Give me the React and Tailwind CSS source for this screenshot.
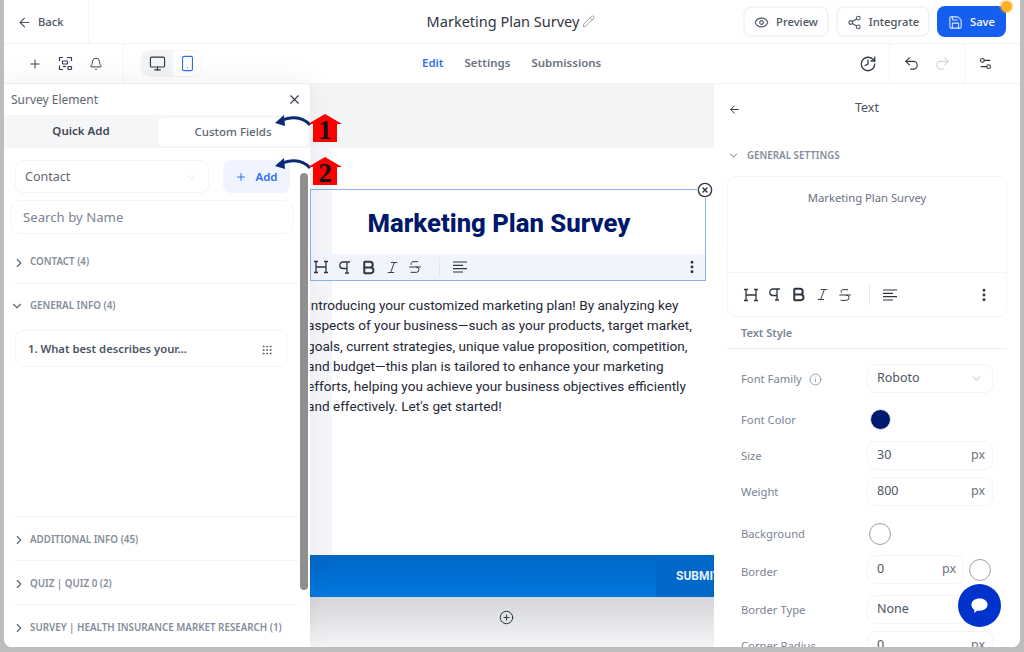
import { ArrowLeft, Eye, Share2, Save, Plus, Bell, Monitor, Smartphone, History, Undo2, Redo2, Settings2, X, ChevronDown, ChevronRight, Grip, Pencil, Bold, Italic, Strikethrough, MoreVertical, Info, CircleX, CirclePlus } from 'lucide-react';

const sections = [
    { label: 'ADDITIONAL INFO (45)' },
    { label: 'QUIZ | QUIZ 0 (2)' },
    { label: 'SURVEY | HEALTH INSURANCE MARKET RESEARCH (1)' },
];

function SerifH({ size = 16 }) {
    return (
        <svg width={size} height={size} viewBox="0 0 16 16" fill="none" stroke="currentColor" strokeWidth="1.3">
            <path d="M1 2.5h4M3 2.5v11M1 13.5h4M11 2.5h4M13 2.5v11M11 13.5h4M3 8h10" />
        </svg>
    );
}

function ParaIcon({ className }) {
    return (
        <svg width="15" height="15" viewBox="0 0 15 15" fill="none" stroke="currentColor" strokeWidth="1.3" className={className}>
            <path d="M13 2H6a3 3 0 0 0 0 6.500h4M10 2v11M8 13h4" />
        </svg>
    );
}

function AlignIcon({ className }) {
    return (
        <svg width="16" height="16" viewBox="0 0 16 16" fill="none" stroke="currentColor" strokeWidth="1.2" className={className}>
            <path d="M1 3h14M1 6.300h10M1 9.600h14M1 13h10" />
        </svg>
    );
}

function FieldsIcon({ className }) {
    return (
        <svg width="15" height="15" viewBox="0 0 15 15" fill="none" stroke="currentColor" strokeWidth="1.2" className={className}>
            <path d="M5 1.500H1.500V5M1.500 9.500v4H5M9 1.500h4.500V5" />
            <rect x="4.500" y="5" width="5" height="3" rx="0.700" />
            <rect x="10" y="10.500" width="3.500" height="3" rx="0.700" />
            <path d="M5 10.500h3" />
        </svg>
    );
}

function TextToolbar({ className }) {
    return (
        <div className={`flex items-center text-[#2f3640] ${className}`}>
            <SerifH />
            <ParaIcon className="ml-2" />
            <Bold size={17} strokeWidth={2.8} className="ml-2" />
            <Italic size={15} strokeWidth={1.5} className="ml-2" />
            <Strikethrough size={16} strokeWidth={1.5} className="ml-[7px]" />
            <div className="w-px h-5 bg-gray-200 ml-4" />
            <AlignIcon className="ml-3" />
            <MoreVertical size={16} strokeWidth={2.4} className="ml-auto" />
        </div>
    );
}

function Callout({ num, className }) {
    return (
        <div className={`absolute w-[72px] h-[32px] ${className}`}>
            <svg width="72" height="32" viewBox="0 0 72 32" className="absolute left-0 top-0">
                <path d="M38 13 C 30 4, 20 4, 8 9" fill="none" stroke="#0a2a78" strokeWidth="2.8" />
                <path d="M3 11 L12 3 L13 14 Z" fill="#0a2a78" />
                <path d="M36 12 L53 2 L70 12 L65 12 L65 30 L41 30 L41 12 Z" fill="#ff0000" />
            </svg>
            <span className="absolute left-[38px] top-[4px] w-[30px] text-center text-[27px] leading-[28px] font-bold text-[#111] font-['Liberation_Serif',serif]">{num}</span>
        </div>
    );
}

function FieldRow({ label, info, children, className = '', labelClass = 'pt-[1px]' }) {
    return (
        <div className={`flex items-center pl-[27px] pr-[27px] ${className}`}>
            <div className={`w-[126px] flex items-center gap-[7px] text-[11.25px] text-[#7b8494] ${labelClass}`}>
                {label}
                {info && <Info size={13} strokeWidth={1.4} />}
            </div>
            {children}
        </div>
    );
}

function PxInput({ value, className = 'w-[126px]' }) {
    return (
        <div className={`h-[29px] border border-gray-100 rounded-lg px-[9px] flex items-center justify-between text-[12.5px] text-[#4b5563] ${className}`}>
            <span>{value}</span>
            <span className="text-[#6b7280] -mr-[2px]">px</span>
        </div>
    );
}

function SectionRow({ label, open, border = true }) {
    return (
        <div className={`h-[44px] flex items-center mx-[11px] ${border ? 'border-t border-gray-100' : ''}`}>
            {open
                ? <ChevronDown size={14} className="shrink-0 text-[#5f6673] -ml-[5px]" />
                : <ChevronRight size={14} className="shrink-0 text-[#5f6673] -ml-[3px] mt-[3px]" />}
            <span className={`${open ? 'ml-[6px] pt-[1px]' : 'ml-[4px] pt-[3px]'} text-[9.8px] font-semibold text-[#858d9b] whitespace-nowrap`}>{label}</span>
        </div>
    );
}

export default function App() {
    return (
        <div className="w-[1024px] h-[652px] overflow-hidden bg-[#bdbdbd] pl-[4px] pr-[4px] pb-[5px] font-['Noto_Sans',sans-serif]">
            <div className="relative w-full h-full bg-white rounded-b-lg overflow-hidden flex flex-col">
                {/* Top bar */}
                <header className="h-[44px] shrink-0 flex items-center border-b border-gray-100">
                    <div className="w-[85px] h-full flex items-center pl-[13px] pt-[1px] gap-[6px] border-r border-gray-100 text-[11.25px] font-medium text-[#4b5563]">
                        <ArrowLeft size={15} strokeWidth={1.8} />
                        Back
                    </div>
                    <div className="flex-1 flex items-center justify-center gap-[3px] ml-[190px] text-[14.5px] text-[#2f3640]">
                        Marketing Plan Survey
                        <Pencil size={13} strokeWidth={1.4} className="text-[#7b8494]" />
                    </div>
                    <div className="flex items-center gap-[7px] pr-[14px]">
                        <button className="w-[86px] h-[31px] pt-[1px] border-2 border-gray-100 rounded-lg flex items-center justify-center gap-[7px] text-[11.25px] font-medium text-[#4b5563]">
                            <Eye size={15} strokeWidth={1.7} />
                            Preview
                        </button>
                        <button className="w-[94px] h-[31px] pt-[1px] border-2 border-gray-100 rounded-lg flex items-center justify-center gap-[7px] text-[11.25px] font-medium text-[#4b5563]">
                            <Share2 size={15} strokeWidth={1.7} />
                            Integrate
                        </button>
                        <button className="relative w-[69px] h-[31px] pt-[1px] rounded-lg bg-[#155eef] flex items-center justify-center gap-[7px] text-[11.25px] font-medium text-white">
                            <Save size={15} strokeWidth={1.7} className="text-blue-100" />
                            Save
                            <span className="absolute -right-[6px] -top-[5px] w-[11px] h-[11px] rounded-full bg-[#fdb022] ring-2 ring-[#fdb022]/25" />
                        </button>
                    </div>
                </header>

                {/* Second bar */}
                <div className="h-[40px] shrink-0 flex items-center border-b border-gray-100">
                    <div className="w-[120px] h-full flex items-center pl-[24px] gap-[16px] border-r border-gray-100 text-[#374151]">
                        <Plus size={14} strokeWidth={1.7} />
                        <FieldsIcon />
                        <Bell size={14} strokeWidth={1.7} />
                    </div>
                    <div className="ml-[17px] flex h-[27px] w-[61px] rounded-lg border border-gray-100 overflow-hidden">
                        <div className="w-[31px] bg-gray-100 flex items-center justify-center text-[#2f3640]"><Monitor size={17} strokeWidth={1.6} /></div>
                        <div className="flex-1 flex items-center justify-center text-[#2f6fed]"><Smartphone size={17} strokeWidth={1.6} /></div>
                    </div>
                    <nav className="ml-[220px] pb-[1px] flex items-center gap-[21px] text-[11.5px] font-semibold text-[#6b7280]">
                        <span className="text-[#2f6fed]">Edit</span>
                        <span>Settings</span>
                        <span>Submissions</span>
                    </nav>
                    <div className="ml-auto flex items-center h-full text-[#2f3640]">
                        <History size={18} strokeWidth={1.7} className="-scale-x-100 mr-[12px]" />
                        <div className="w-[76px] h-full flex items-center justify-center gap-[14px] border-x border-gray-100">
                            <Undo2 size={17} strokeWidth={1.6} />
                            <Redo2 size={17} strokeWidth={1.6} className="text-gray-300" />
                        </div>
                        <div className="w-[55px] pl-[13px] flex justify-start"><Settings2 size={15} strokeWidth={1.7} /></div>
                    </div>
                </div>

                {/* Workspace */}
                <div className="flex-1 min-h-0 flex">
                    {/* Left panel */}
                    <aside className="relative w-[306px] shrink-0 bg-white z-10 shadow-[0_-6px_24px_rgba(0,0,0,0.05)] rounded-tr-lg">
                        <div className="h-[31px] flex items-center justify-between pl-[7px] pr-[8px] text-[12px] text-[#5f6673]">
                            <span>Survey Element</span>
                            <X size={15} strokeWidth={1.7} className="text-[#2f3640]" />
                        </div>
                        <div className="h-[33px] bg-[#f5f6f8] flex items-center pr-[2px] text-[11.5px] font-semibold">
                            <div className="w-[154px] text-center pb-[1px] text-[#3f4652]">Quick Add</div>
                            <div className="flex-1 h-[28px] bg-white rounded flex items-center justify-center font-medium text-[#5f6673]">Custom Fields</div>
                        </div>
                        <div className="flex gap-[14px] pl-[11px] mt-[12px]">
                            <div className="w-[194px] h-[33px] border-[1.5px] border-gray-100 rounded-lg flex items-center justify-between pl-[9px] pr-[10px] pt-[1px] text-[12.5px] text-[#5f6673]">
                                Contact
                                <ChevronDown size={13} strokeWidth={1.3} className="text-gray-300" />
                            </div>
                            <div className="w-[67px] h-[33px] rounded-lg bg-[#eff4ff] flex items-center justify-center gap-[8px] text-[11.5px] font-semibold text-[#2f6fed]">
                                <Plus size={12} strokeWidth={2} />
                                Add
                            </div>
                        </div>
                        <div className="w-[282px] h-[34px] ml-[7px] mt-[7px] border-[1.5px] border-gray-100 rounded-lg flex items-center pl-[11px] pt-[1px] text-[13.2px] text-[#7b8494]">Search by Name</div>
                        <div className="mt-[5px]">
                            <SectionRow label="CONTACT (4)" border={false} />
                            <SectionRow label="GENERAL INFO (4)" open />
                            <div className="w-[272px] h-[37px] ml-[11px] mt-[3px] pt-[2px] border-[1.5px] border-gray-100 rounded-lg flex items-center justify-between pl-[12px] pr-[13px] text-[11.25px] font-semibold text-[#4b5563]">
                                1. What best describes your...
                                <Grip size={12} strokeWidth={1.8} />
                            </div>
                        </div>
                        <div className="mt-[149px]">
                            {sections.map((s) => <SectionRow key={s.label} label={s.label} />)}
                        </div>
                        <div className="absolute right-[2px] top-[89px] w-[8px] h-[417px] rounded-full bg-[#8f8f8f]" />
                        <Callout num="1" className="left-[268px] top-[28px]" />
                        <Callout num="2" className="left-[268px] top-[71px]" />
                    </aside>

                    {/* Canvas */}
                    <main className="flex-1 min-w-0 overflow-hidden flex flex-col bg-[#f3f4f6]">
                        <div className="h-[64px] shrink-0" />
                        <div className="relative h-[407px] shrink-0 bg-white">
                            <div className="absolute left-0 top-0 bottom-0 w-[22px] bg-[#f5f6f9]" />
                            <div className="relative pt-[41px] pr-[8px]">
                                <div className="relative h-[92px] border-[1.5px] border-[#8fb0f2] flex flex-col">
                                    <h1 className="flex-1 flex items-center justify-center pr-[18px] pt-[2px] text-[25.7px] font-extrabold text-[#00186b] font-['Roboto',sans-serif]">Marketing Plan Survey</h1>
                                    <TextToolbar className="h-[26px] bg-[#f0f4fd] pl-[2px] pr-[5px]" />
                                    <div className="absolute -right-[8px] -top-[8px] bg-white rounded-full text-[#2f3640]">
                                        <CircleX size={16} strokeWidth={2} />
                                    </div>
                                </div>
                                <p className="mt-[14px] -ml-[3px] whitespace-nowrap text-[13.6px] leading-[20.3px] text-[#1f2937] font-['Roboto',sans-serif]">
                                    Introducing your customized marketing plan! By analyzing key<br />
                                    aspects of your business—such as your products, target market,<br />
                                    goals, current strategies, unique value proposition, competition,<br />
                                    and budget—this plan is tailored to enhance your marketing<br />
                                    efforts, helping you achieve your business objectives efficiently<br />
                                    and effectively. Let's get started!
                                </p>
                            </div>
                        </div>
                        <div className="h-[42px] shrink-0 bg-gradient-to-b from-[#0066c4] to-[#0078e0] flex justify-end">
                            <div className="w-[58px] overflow-hidden bg-[#0068c8] flex items-center pl-[20px] text-[12px] font-bold text-[#e6f0fb] whitespace-nowrap font-['Roboto',sans-serif]">SUBMIT</div>
                        </div>
                        <div className="flex-1 bg-gradient-to-b from-[#d5d6d9] to-[#f3f4f6] flex justify-center pt-[13px] pr-[12px]">
                            <CirclePlus size={15} strokeWidth={1.6} className="text-[#2f3640]" />
                        </div>
                    </main>

                    {/* Right panel */}
                    <aside className="relative w-[306px] shrink-0 bg-white z-10">
                        <div className="h-[48px] relative flex items-center justify-center text-[12.5px] text-[#4b5563]">
                            <ArrowLeft size={13} strokeWidth={1.8} className="absolute left-[14px] top-[19px] text-[#2f3640]" />
                            Text
                        </div>
                        <div className="h-[46px] flex items-center pl-[13px] pt-[1px] gap-[7px] text-[9.8px] font-semibold text-[#858d9b]">
                            <ChevronDown size={13} strokeWidth={1.7} className="text-[#5f6673]" />
                            <span className="pt-[2px]">GENERAL SETTINGS</span>
                        </div>
                        <div className="mx-[13px] h-[141px] mt-[-2px] border-[1.5px] border-gray-100 rounded-lg flex flex-col">
                            <div className="flex-1 text-center pt-[13px] text-[11.25px] text-[#6b7280]">Marketing Plan Survey</div>
                            <TextToolbar className="h-[44px] border-t border-gray-100 pl-[15px] pr-[14px]" />
                        </div>
                        <div className="mx-[13px] h-[32px] flex items-center border-b border-[#e3f0f8] pl-[1px]">
                            <span className="text-[11px] font-semibold text-[#7b8494] pl-[13px] pt-[1px]">Text Style</span>
                        </div>
                        <div className="mt-[15px]">
                            <FieldRow label="Font Family" info>
                                <div className="w-[126px] h-[29px] border border-gray-100 rounded-lg flex items-center justify-between px-[9px] text-[12.5px] text-[#4b5563]">
                                    Roboto
                                    <ChevronDown size={13} strokeWidth={1.3} className="text-gray-400" />
                                </div>
                            </FieldRow>
                            <FieldRow label="Font Color" className="h-[21px] mt-[16px]">
                                <div className="w-[21px] h-[21px] ml-[3px] rounded-full bg-[#001a70] border border-gray-200" />
                            </FieldRow>
                            <FieldRow label="Size" className="mt-[11px]"><PxInput value="30" /></FieldRow>
                            <FieldRow label="Weight" className="mt-[7px]"><PxInput value="800" /></FieldRow>
                            <FieldRow label="Background" className="h-[22px] mt-[17px]">
                                <div className="w-[22px] h-[22px] ml-[2px] rounded-full border border-gray-400" />
                            </FieldRow>
                            <FieldRow label="Border" labelClass="pt-[5px]" className="mt-[10px]">
                                <PxInput value="0" className="w-[97px]" />
                                <div className="w-[22px] h-[22px] rounded-full border border-gray-400 ml-[5px]" />
                            </FieldRow>
                            <FieldRow label="Border Type" className="mt-[11px]">
                                <div className="w-[126px] h-[29px] border border-gray-100 rounded-lg flex items-center px-[9px] text-[12.5px] text-[#4b5563]">None</div>
                            </FieldRow>
                            <FieldRow label="Corner Radius" className="mt-[7px]"><PxInput value="0" /></FieldRow>
                        </div>
                        <button className="absolute right-[19px] bottom-[20px] w-[43px] h-[43px] rounded-full bg-[#0033cc] flex items-center justify-center">
                            <svg width="19" height="19" viewBox="0 0 20 20" fill="white">
                                <path d="M10 2.500c5 0 8.500 2.800 8.500 6.500s-3.500 6.500-8.500 6.500c-.8 0-1.500-.1-2.200-.2L4.500 18v-3.500C2.500 13.300 1.500 11.300 1.500 9c0-3.700 3.500-6.500 8.500-6.500z" />
                            </svg>
                        </button>
                    </aside>
                </div>
            </div>
        </div>
    );
}
